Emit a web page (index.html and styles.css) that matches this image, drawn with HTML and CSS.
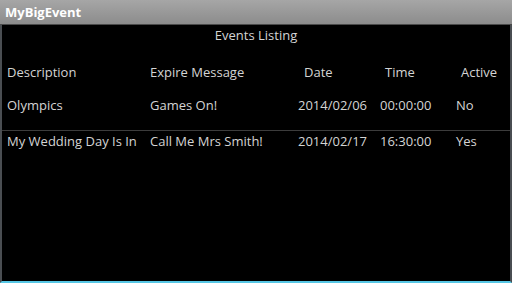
FILE: index.html
```html
<!DOCTYPE html>
<html lang="en">
<head>
    <meta charset="UTF-8">
    <meta name="viewport" content="width=device-width, initial-scale=1.0">
    <title>MyBigEvent</title>
    <link rel="stylesheet" href="styles.css">
</head>
<body>
    <div class="title-bar">MyBigEvent</div>
    <div class="screen">
        <div class="heading">Events Listing</div>
        <div class="table">
            <!-- Cabecalho -->
            <div class="row head">
                <div class="cell">Description</div>
                <div class="cell">Expire Message</div>
                <div class="cell date">Date</div>
                <div class="cell time">Time</div>
                <div class="cell active">Active</div>
            </div>
            <div class="row first">
                <div class="cell">Olympics</div>
                <div class="cell">Games On!</div>
                <div class="cell">2014/02/06</div>
                <div class="cell">00:00:00</div>
                <div class="cell">No</div>
            </div>
            <div class="row">
                <div class="cell">My Wedding Day Is In</div>
                <div class="cell">Call Me Mrs Smith!</div>
                <div class="cell">2014/02/17</div>
                <div class="cell">16:30:00</div>
                <div class="cell">Yes</div>
            </div>
        </div>
    </div>
</body>
</html>
```

FILE: styles.css
```css
html, body {
    margin: 0;
    height: 100%;
}
body {
    display: flex;
    flex-direction: column;
    background-color: black;
    font-family: "Open Sans", "Noto Sans", sans-serif;
    font-size: 13px;
    color: #d4d4d4;
}
.title-bar {
    height: 24px;
    line-height: 24px;
    padding-left: 5px;
    background: linear-gradient(#a6a6a6, #8c8c8c);
    border-bottom: 1px solid #4a4a4a;
    color: white;
    font-weight: bold;
    font-size: 13px;
}
.screen {
    flex: 1;
    border-left: 2px solid #4a4e52;
    border-right: 2px solid #4a4e52;
    border-bottom: 2px solid #56c6e4;
}
.heading {
    text-align: center;
    height: 20px;
    line-height: 20px;
}
.row {
    display: grid;
    grid-template-columns: 143px 148px 82px 76px 1fr;
    padding-left: 5px;
    height: 20px;
    line-height: 20px;
}
.row.head {
    margin-top: 17px;
}
.row.first {
    margin-top: 13px;
    padding-bottom: 15px;
    border-bottom: 1px solid #3c3c3c;
}
.cell {
    white-space: nowrap;
}
.cell.date { padding-left: 6px; }
.cell.time { padding-left: 5px; }
.cell.active { padding-left: 5px; }
```
